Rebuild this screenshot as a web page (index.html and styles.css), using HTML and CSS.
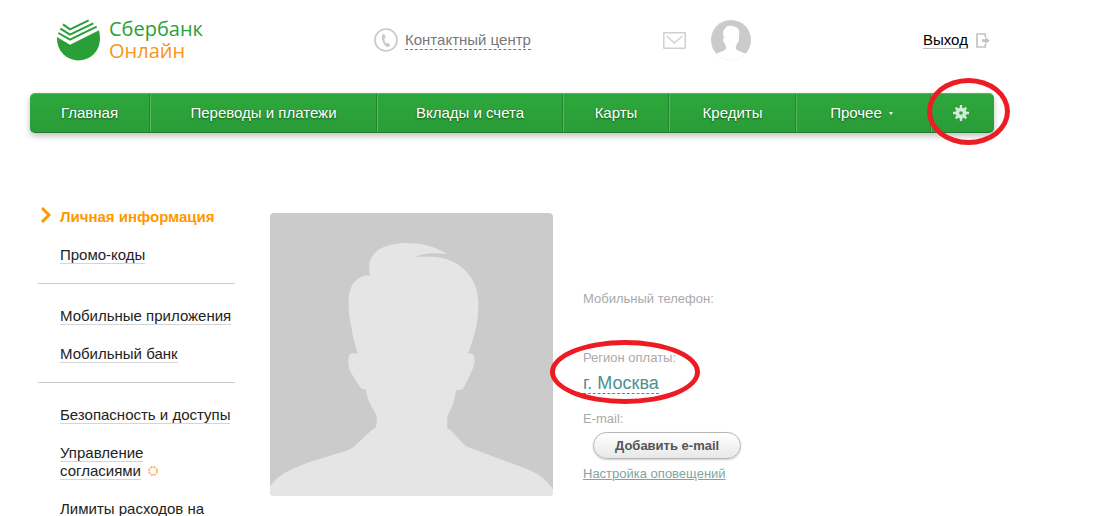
FILE: index.html
```html
<!DOCTYPE html>
<html lang="ru">
<head>
  <meta charset="UTF-8">
  <title>Сбербанк Онлайн</title>
  <link rel="stylesheet" href="styles.css">
</head>
<body>
  <div class="page">
    <header class="header">
      <a class="logo" href="#">
        <svg class="logo-mark" viewBox="0 0 129 129">
          <path fill="#2a9f38" d="M0 54 L39 77 L126 34 Q129 46 129 60 A64.500 64.500 0 0 1 0 60Z"/>
          <path fill="none" stroke="#2a9f38" stroke-width="6" d="M4 42 L39 62 L119 23 M10 29 L39 47 L109 13 M18 16 L39 31 L95 4"/>
        </svg>
        <span class="logo-text">
          <span>Сбербанк</span>
          <span class="logo-sub">Онлайн</span>
        </span>
      </a>
      <div class="contact">
        <svg class="contact-icon" viewBox="0 0 72 72">
          <circle cx="36" cy="36" r="33" fill="none" stroke="#c9c9c9" stroke-width="5"/>
          <path fill="#c9c9c9" d="M26 19 Q30 16 32 20 L35 28 Q35 31 31 32 Q31 41 37 47 Q41 43 43 45 L48 51 Q49 54 45 56 Q38 60 31 50 Q19 31 26 19Z"/>
        </svg>
        <a class="contact-link" href="#">Контактный центр</a>
      </div>
      <div class="user">
        <a class="mail" href="#" aria-label="Письма">
          <svg class="mail-icon" viewBox="0 0 69 51" fill="none" stroke="#d0d0d0">
            <rect x="2" y="2" width="65" height="47" rx="4" stroke-width="5"/>
            <path stroke-width="4" d="M11 12 L34 33 L58 12"/>
          </svg>
        </a>
        <svg class="user-icon" viewBox="0 0 120 120">
          <clipPath id="round"><circle cx="60" cy="60" r="60"/></clipPath>
          <g clip-path="url(#round)">
            <rect width="120" height="120" fill="#cbcbcb"/>
            <path fill="#fff" d="M36 40 Q35 30 42 26 Q46 16 61 17 L72 20 Q85 23 85 40 L83 55 Q86 57 83 64 L78 71 L74 80 L75 88 L82 92 L105 101 L112 120 L8 120 L15 101 L38 92 L45 87 L45 80 L41 70 L36 62 Q35 56 39 55Z"/>
          </g>
        </svg>
      </div>
      <a class="logout" href="#">
        <span class="logout-text">Выход</span>
        <svg class="logout-icon" viewBox="0 0 42 45">
          <path fill="none" stroke="#c4c4c4" stroke-width="5" d="M28 12 V3 H3 V42 H28 V33"/>
          <path fill="#c4c4c4" d="M18 19 H28 V11 L41 22.500 L28 34 V27 H18Z"/>
        </svg>
      </a>
    </header>

    <nav class="menu">
      <a class="menu-item" href="#">Главная</a>
      <a class="menu-item" href="#">Переводы и платежи</a>
      <a class="menu-item" href="#">Вклады и счета</a>
      <a class="menu-item" href="#">Карты</a>
      <a class="menu-item" href="#">Кредиты</a>
      <a class="menu-item more" href="#">Прочее <span class="arrow"></span></a>
      <a class="menu-item settings" href="#" aria-label="Настройки">
        <svg class="gear" viewBox="-24 -24 48 48">
          <g stroke="#d4ecd7" stroke-width="7">
            <path d="M0 -24 V-12 M0 12 V24 M-24 0 H-12 M12 0 H24"/>
            <path d="M-16 -16 L-9 -9 M9 9 L16 16 M-16 16 L-9 9 M9 -9 L16 -16"/>
          </g>
          <circle r="11" fill="none" stroke="#d4ecd7" stroke-width="11"/>
        </svg>
        <span class="mark mark-settings"></span>
      </a>
    </nav>

    <main class="content">
      <aside class="sidebar">
        <ul class="links">
          <li class="active">
            <svg class="chevron" viewBox="0 0 10 16"><path fill="none" stroke="#ff9800" stroke-width="3" d="M1 1 L8 8 L1 15"/></svg>
            <a href="#">Личная информация</a>
          </li>
          <li><a href="#">Промо-коды</a></li>
        </ul>
        <ul class="links">
          <li><a href="#">Мобильные приложения</a></li>
          <li><a href="#">Мобильный банк</a></li>
        </ul>
        <ul class="links">
          <li><a href="#">Безопасность и доступы</a></li>
          <li>
            <a href="#">Управление<br>согласиями</a>
            <svg class="new-icon" viewBox="0 0 12 12"><circle cx="6" cy="6" r="4" fill="none" stroke="#ffb56b" stroke-width="2" stroke-dasharray="2.200 0.940"/></svg>
          </li>
          <li><a href="#">Лимиты расходов на</a></li>
        </ul>
      </aside>

      <svg class="photo" viewBox="30 24 849 849">
        <rect x="30" y="24" width="849" height="849" fill="#cbcbcb"/>
        <path fill="#e5e5e5" d="M330 211 C318 165 340 114 442 114 C490 114 530 128 562 147 C525 143 485 142 469 156 C500 155 530 155 550 160 C610 175 655 225 655 295 C656 350 645 390 624 445 C640 444 645 452 644 468 C642 490 625 520 614 542 C608 555 603 555 588 555 C586 575 582 590 577 602 C566 625 562 628 562 645 V672 C570 671 571 674 578 682 L610 716 Q616 723 625 727 L800 792 C830 803 858 822 879 852 V873 H30 V843 C60 802 115 784 150 771 L265 735 Q275 731 284 723 L333 677 C342 669 348 671 349 660 C351 640 351 632 345 622 C333 602 324 590 317 553 C306 554 304 551 299 544 C287 525 268 500 266 484 C262 445 270 442 294 446 C284 420 278 390 274 365 C258 290 260 211 330 211Z"/>
      </svg>

      <section class="details">
        <p class="label phone">Мобильный телефон:</p>
        <div class="region">
          <p class="label">Регион оплаты:</p>
          <a class="region-link" href="#">г. Москва</a>
          <span class="mark mark-region"></span>
        </div>
        <p class="label">E-mail:</p>
        <button class="add-email" type="button">Добавить e-mail</button>
        <a class="notify" href="#">Настройка оповещений</a>
      </section>
    </main>
  </div>
</body>
</html>
```
FILE: styles.css
```css
* {
  box-sizing: border-box;
}
body {
  margin: 0;
  background: #fff;
  font-family: "Liberation Sans", Arial, sans-serif;
  font-size: 15px;
  line-height: 18px;
  color: #222;
}
a {
  color: inherit;
  text-decoration: none;
}
p, ul {
  margin: 0;
  padding: 0;
}
svg {
  display: block;
  flex: none;
}
.page {
  max-width: 964px;
  margin-left: 30px;
}

/* header */
.header {
  display: grid;
  grid-template-columns: 344fr 289fr 230fr 101fr;
  align-items: center;
  padding: 18px 0 31px;
}
.logo {
  display: flex;
  align-items: center;
  gap: 9px;
  padding-left: 27px;
}
.logo-mark {
  width: 43px;
  height: 43px;
}
.logo-text {
  display: flex;
  flex-direction: column;
  font-family: "Open Sans", "Noto Sans", sans-serif;
  font-size: 20px;
  line-height: 22px;
  color: #2a9f38;
}
.logo-sub {
  color: #f7941d;
}
.contact {
  display: flex;
  align-items: center;
  gap: 7px;
}
.contact-icon {
  width: 24px;
  height: 24px;
}
.contact-link {
  color: #777;
  border-bottom: 1px dashed #777;
}
.user {
  display: flex;
  align-items: center;
  gap: 25px;
}
.mail-icon {
  width: 23px;
  height: 17px;
}
.user-icon {
  width: 40px;
  height: 40px;
}
.logout {
  display: flex;
  align-items: center;
  gap: 8px;
  padding-left: 30px;
  color: #000;
}
.logout-text {
  line-height: 16px;
  border-bottom: 1px solid #bbb;
}
.logout-icon {
  width: 14px;
  height: 15px;
}

/* main menu */
.menu {
  display: grid;
  grid-template-columns: 120fr 227fr 186fr 106fr 127fr 135fr 63fr;
  height: 40px;
  border-radius: 5px;
  background: linear-gradient(#2da83b, #2a9c38);
  border-top: 1px solid #4fb45a;
  border-bottom: 1px solid #1f7a2a;
  box-shadow: 0 3px 6px rgba(0, 0, 0, 0.25);
}
.menu-item {
  position: relative;
  display: flex;
  align-items: center;
  justify-content: center;
  gap: 7px;
  color: #fff;
  text-shadow: 0 1px 2px rgba(0, 0, 0, 0.5);
  border-left: 1px solid #57b862;
  border-right: 1px solid #23852f;
}
.menu-item:first-child {
  border-left: none;
}
.menu-item:last-child {
  border-right: none;
}
.more, .settings {
  padding-right: 4px;
}
.arrow {
  border: 2px solid transparent;
  border-top: 3px solid #fff;
  border-bottom: none;
}
.gear {
  width: 16px;
  height: 16px;
}
.mark {
  position: absolute;
  border: 5px solid #ed1c24;
  border-radius: 50%;
  pointer-events: none;
}
.mark-settings {
  left: -5px;
  top: -16px;
  width: 83px;
  height: 67px;
}

/* content */
.content {
  display: flex;
  align-items: flex-start;
  padding: 75px 0 0 8px;
}
.sidebar {
  flex: 0 0 197px;
}
.links {
  display: flex;
  flex-direction: column;
  gap: 20px;
  padding: 23px 0 19px 22px;
  list-style: none;
  border-bottom: 1px solid #ccc;
}
.links:first-child {
  padding-top: 0;
}
.links:last-child {
  border-bottom: none;
}
.links li {
  position: relative;
  white-space: nowrap;
}
.links a {
  border-bottom: 1px solid #d5d5d5;
}
.links .active a {
  color: #ff9800;
  font-weight: bold;
  border-bottom: none;
}
.chevron {
  position: absolute;
  left: -19px;
  top: -1px;
  width: 10px;
  height: 16px;
}
.new-icon {
  display: inline-block;
  width: 12px;
  height: 12px;
  margin-left: 2px;
  vertical-align: -1px;
}
.photo {
  width: 283px;
  height: 283px;
  margin: 5px 30px 0 35px;
  border-radius: 4px;
}
.details {
  display: flex;
  flex-direction: column;
  align-items: flex-start;
  padding-top: 82px;
}
.label {
  font-size: 13px;
  color: #aaa;
}
.phone {
  margin-bottom: 41px;
}
.region {
  position: relative;
  margin-bottom: 16px;
}
.region-link {
  display: block;
  margin-top: 6px;
  font-size: 18px;
  line-height: 20px;
  color: #4f8f92;
  border-bottom: 1px dashed #4f8f92;
  width: fit-content;
}
.mark-region {
  left: -33px;
  top: -9px;
  width: 150px;
  height: 64px;
}
.add-email {
  height: 27px;
  margin: 4px 0 6px 10px;
  padding: 0 21px;
  border: 1px solid #b5b5b5;
  border-radius: 14px;
  background: linear-gradient(#fff, #e8e8e8);
  box-shadow: 0 1px 2px rgba(0, 0, 0, 0.2);
  font-family: inherit;
  font-size: 13px;
  font-weight: bold;
  color: #555;
}
.notify {
  font-size: 13px;
  color: #7fa5a5;
  text-decoration: underline;
}
```
